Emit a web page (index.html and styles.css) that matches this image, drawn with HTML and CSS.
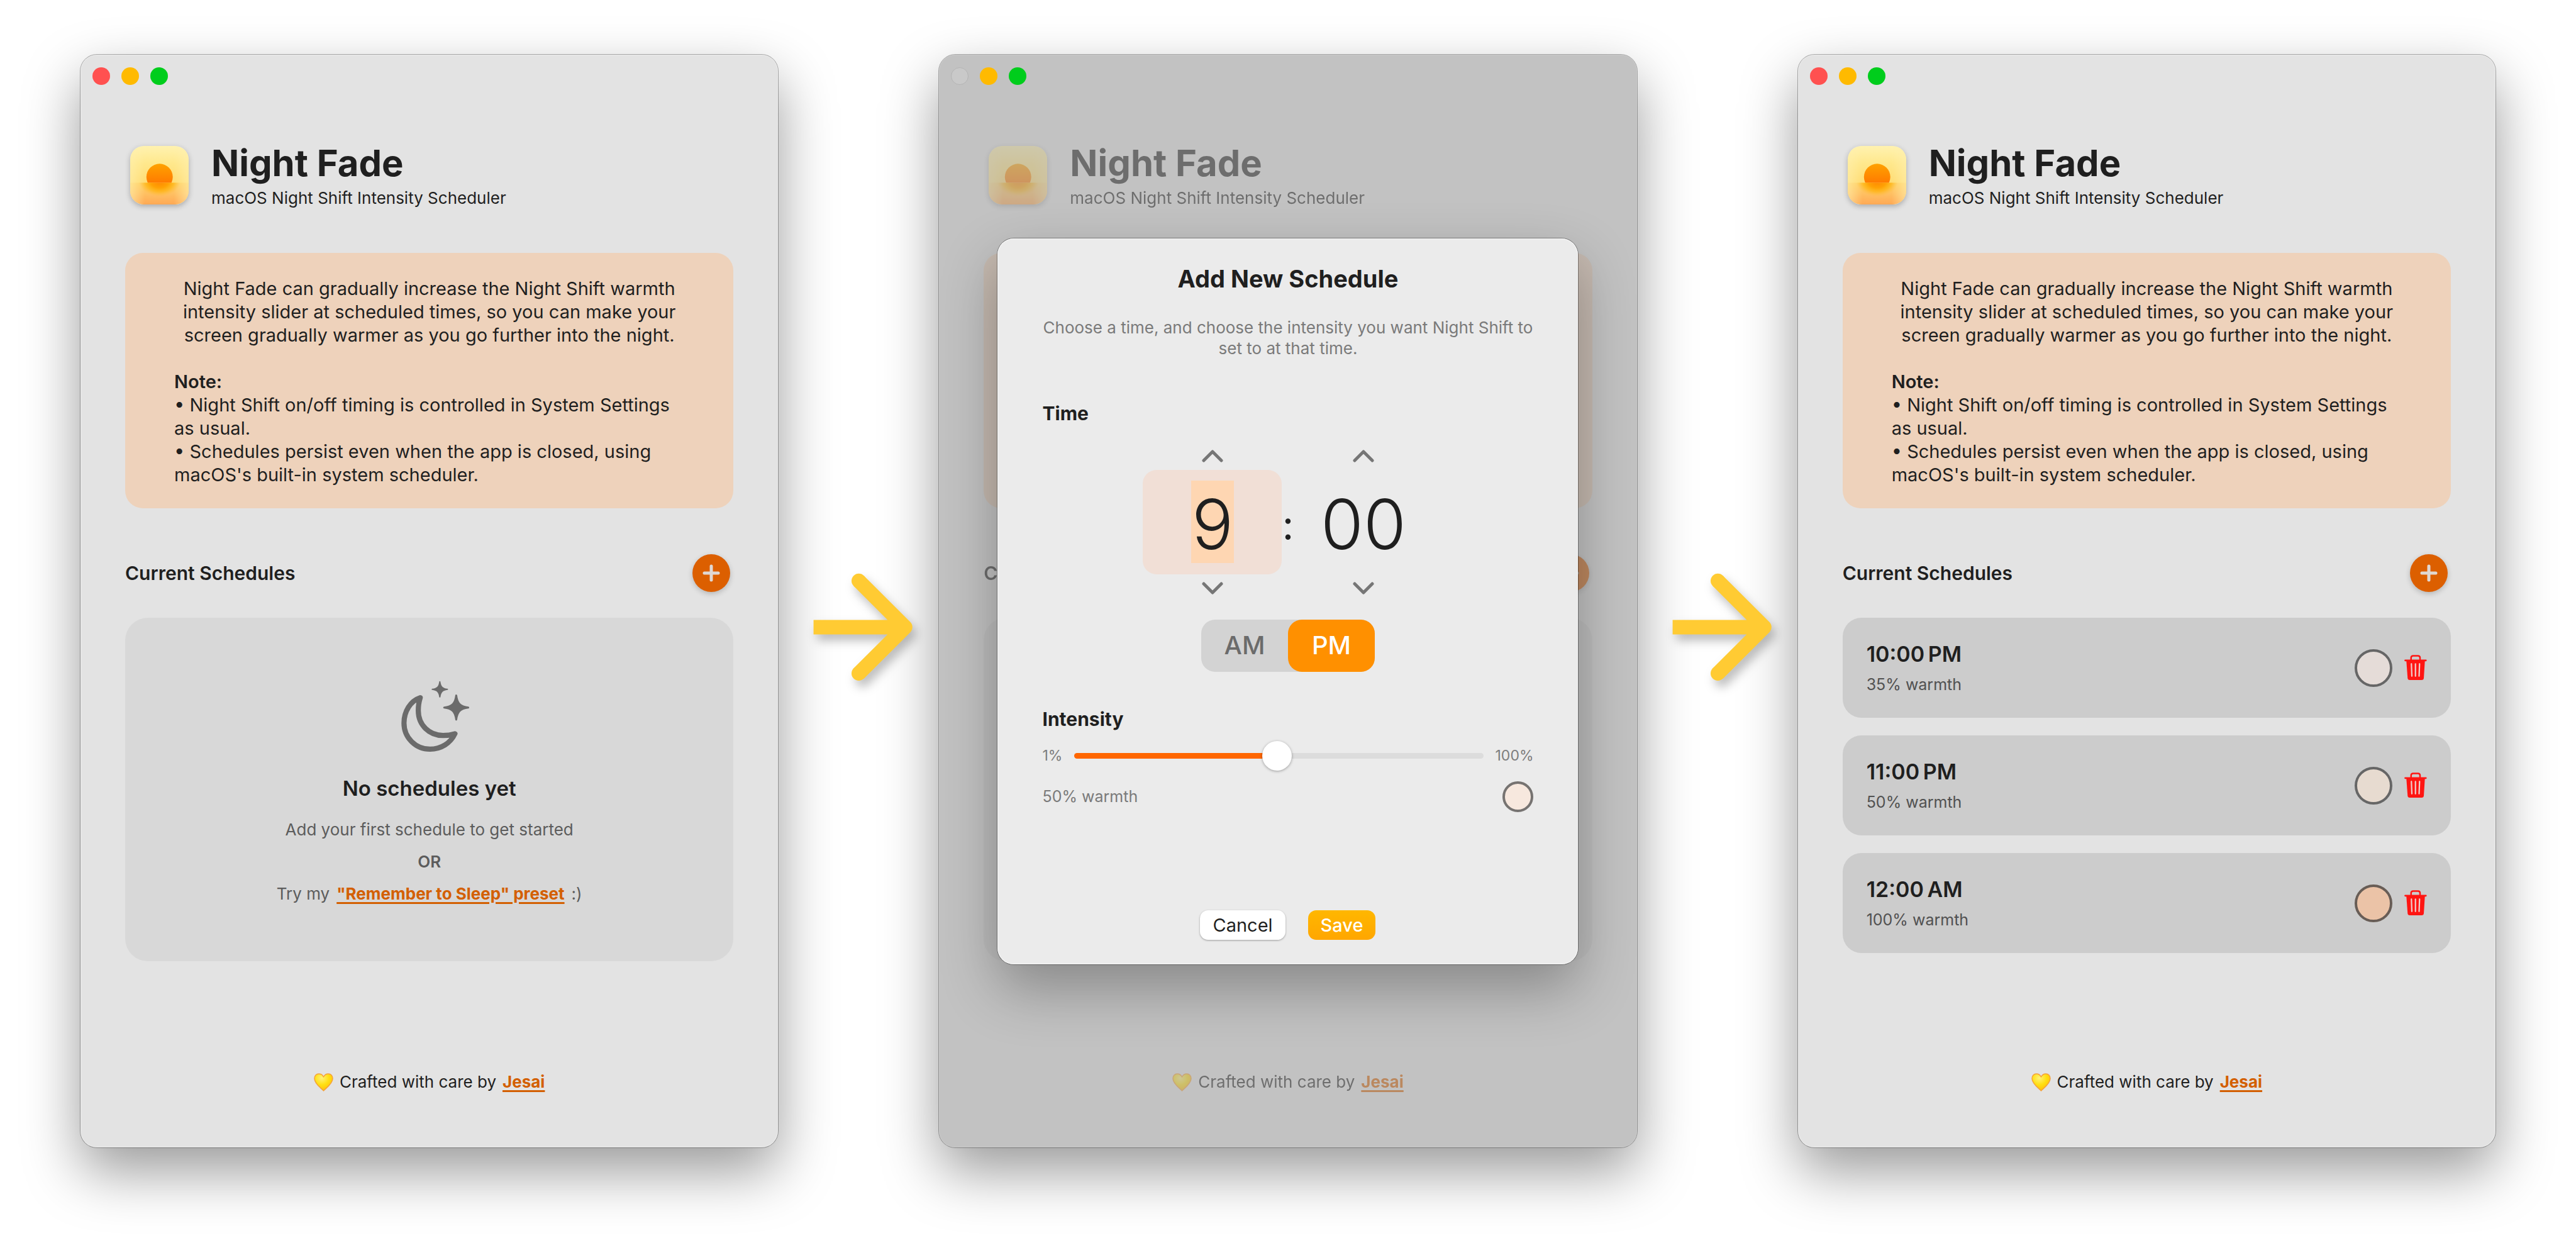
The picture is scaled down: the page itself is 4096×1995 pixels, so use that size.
FILE: index.html
```html
<!DOCTYPE html>
<html lang="en">
<head>
<meta charset="utf-8">
<meta name="viewport" content="width=device-width, initial-scale=1">
<title>Night Fade</title>
<link rel="stylesheet" href="styles.css">
</head>
<body>
<svg class="sprite" width="0" height="0" aria-hidden="true">
  <defs>
    <linearGradient id="sky" x1="0" y1="0" x2="0" y2="1">
      <stop offset="0" stop-color="#fff2b0"/>
      <stop offset="0.3" stop-color="#ffe88c"/>
      <stop offset="0.62" stop-color="#ffdc74"/>
    </linearGradient>
    <linearGradient id="sea" x1="0" y1="0" x2="0" y2="1">
      <stop offset="0" stop-color="#ffd062"/>
      <stop offset="0.5" stop-color="#ffc062"/>
      <stop offset="1" stop-color="#ffa955"/>
    </linearGradient>
    <linearGradient id="edge" x1="0" y1="0" x2="1" y2="0">
      <stop offset="0" stop-color="#fff0b0" stop-opacity="0.6"/>
      <stop offset="0.25" stop-color="#fff0b0" stop-opacity="0"/>
      <stop offset="0.75" stop-color="#fff0b0" stop-opacity="0"/>
      <stop offset="1" stop-color="#fff0b0" stop-opacity="0.6"/>
    </linearGradient>
    <linearGradient id="sun" x1="0" y1="0" x2="0" y2="1">
      <stop offset="0" stop-color="#ffa200"/>
      <stop offset="0.7" stop-color="#ff7c00"/>
    </linearGradient>
    <radialGradient id="glow" gradientUnits="userSpaceOnUse" cx="183" cy="218" r="130" gradientTransform="translate(0 54) scale(1 0.75)">
      <stop offset="0" stop-color="#ff8400"/>
      <stop offset="0.45" stop-color="#ffa000" stop-opacity="0.95"/>
      <stop offset="0.7" stop-color="#ffb000" stop-opacity="0.6"/>
      <stop offset="1" stop-color="#ffbc30" stop-opacity="0"/>
    </radialGradient>
    <clipPath id="above"><rect width="364" height="229"/></clipPath>
    <clipPath id="below"><rect y="229" width="364" height="135"/></clipPath>
    <clipPath id="tile"><rect width="364" height="364" rx="84"/></clipPath>
    <radialGradient id="gold" cx="0.4" cy="0.25" r="0.8">
      <stop offset="0" stop-color="#fff27a"/>
      <stop offset="0.5" stop-color="#ffdf12"/>
      <stop offset="1" stop-color="#fdb90d"/>
    </radialGradient>
    <symbol id="app" viewBox="0 0 364 364">
      <g clip-path="url(#tile)">
        <rect width="364" height="364" fill="url(#sky)"/>
        <rect y="229" width="364" height="135" fill="url(#sea)"/>
        <rect width="364" height="364" fill="url(#edge)"/>
        <circle cx="183" cy="193" r="82" fill="url(#sun)" clip-path="url(#above)"/>
        <rect width="364" height="364" fill="url(#glow)" clip-path="url(#below)"/>
      </g>
    </symbol>
    <symbol id="heart" viewBox="0 0 62 58">
      <path d="M31 56 C27 51 2 34 2 17 C2 8 8 2 16 2 C23 2 28 6 31 12 C34 6 39 2 46 2 C54 2 60 8 60 17 C60 34 35 51 31 56Z" fill="url(#gold)" stroke="#f5a13a" stroke-width="3" stroke-linejoin="round"/>
    </symbol>
    <symbol id="trash" viewBox="336 165 144 164">
      <path d="M349 202 H467 L460 312 Q459 325 446 325 H371 Q358 325 357 312Z"/>
      <path d="M342 200 H473" fill="none" stroke="currentColor" stroke-width="11" stroke-linecap="round"/>
      <path d="M379 200 V184 Q379 171 392 171 H423 Q436 171 436 184 V200" fill="none" stroke="currentColor" stroke-width="10"/>
      <path d="M381 222 L384 300 M407 222 V300 M433 222 L430 300" fill="none" stroke="#f0cdca" stroke-width="9" stroke-linecap="round"/>
    </symbol>
    <symbol id="up" viewBox="0 0 34 20">
      <path d="M3 17 L17 3 L31 17" fill="none" stroke="currentColor" stroke-width="5" stroke-linecap="round" stroke-linejoin="round"/>
    </symbol>
    <symbol id="down" viewBox="0 0 34 20">
      <path d="M3 3 L17 17 L31 3" fill="none" stroke="currentColor" stroke-width="5" stroke-linecap="round" stroke-linejoin="round"/>
    </symbol>
    <symbol id="plus" viewBox="0 0 28 28">
      <path d="M14 3 V25 M3 14 H25" fill="none" stroke="currentColor" stroke-width="5" stroke-linecap="round"/>
    </symbol>
    <symbol id="moon" viewBox="-16 50 500 450">
      <path d="M176 160 C115 180 75 245 75 318 C75 408 147 480 237 480 C305 480 365 442 392 384 C370 391 345 395 318 395 C232 395 164 330 164 240 C164 210 168 184 176 160Z" fill="none" stroke="currentColor" stroke-width="32" stroke-linejoin="round"/>
      <path d="M400 146 C406 196 425 215 475 221 C425 227 406 246 400 296 C394 246 375 227 325 221 C375 215 394 196 400 146Z" stroke="currentColor" stroke-width="12" stroke-linejoin="round"/>
      <path d="M298 61 C302 92 314 104 345 108 C314 112 302 124 298 155 C294 124 282 112 251 108 C282 104 294 92 298 61Z" stroke="currentColor" stroke-width="8" stroke-linejoin="round"/>
    </symbol>
    <symbol id="arrow" viewBox="-32 28 1000 1000">
      <path d="M189 528 H740 M470 240 L758 528 L470 815" fill="none" stroke="#ffcb33" stroke-width="90" stroke-linejoin="round"/>
      <circle cx="470" cy="240" r="45" fill="#ffcb33"/>
      <circle cx="470" cy="815" r="45" fill="#ffcb33"/>
    </symbol>
  </defs>
</svg>

<main class="stage">
  <section class="window" aria-label="Empty schedule list">
    <div class="lights"><span class="light close"></span><span class="light minimize"></span><span class="light expand"></span></div>
    <div class="content">
      <header class="brand">
        <svg class="app-icon" aria-hidden="true"><use href="#app"/></svg>
        <div>
          <h1 class="name">Night Fade</h1>
          <p class="tagline">macOS Night Shift Intensity Scheduler</p>
        </div>
      </header>
      <div class="info">
        <p class="lead">Night Fade can gradually increase the Night Shift warmth intensity slider at scheduled times, so you can make your screen gradually warmer as you go further into the night.</p>
        <p class="note"><strong>Note:</strong><br>• Night Shift on/off timing is controlled in System Settings as usual.<br>• Schedules persist even when the app is closed, using macOS's built-in system scheduler.</p>
      </div>
      <div class="section-head">
        <h2 class="section-title">Current Schedules</h2>
        <button class="add" type="button" aria-label="Add schedule"><svg class="plus" aria-hidden="true"><use href="#plus"/></svg></button>
      </div>
      <div class="empty">
        <svg class="moon" aria-hidden="true"><use href="#moon"/></svg>
        <h3 class="empty-title">No schedules yet</h3>
        <p class="hint first">Add your first schedule to get started</p>
        <p class="hint or">OR</p>
        <p class="hint try"><span>Try my</span><a class="link" href="#preset">"Remember to Sleep" preset</a><span>:)</span></p>
      </div>
      <footer class="credit"><svg class="heart" aria-hidden="true"><use href="#heart"/></svg><span>Crafted with care by</span><a class="link" href="#jesai">Jesai</a></footer>
    </div>
  </section>

  <svg class="arrow" viewBox="0 0 256 256" aria-hidden="true"><use href="#arrow"/></svg>

  <section class="window busy" aria-label="Adding a schedule">
    <div class="lights"><span class="light disabled"></span><span class="light minimize"></span><span class="light expand"></span></div>
    <div class="content">
      <header class="brand">
        <svg class="app-icon" aria-hidden="true"><use href="#app"/></svg>
        <div>
          <h1 class="name">Night Fade</h1>
          <p class="tagline">macOS Night Shift Intensity Scheduler</p>
        </div>
      </header>
      <div class="info"></div>
      <div class="section-head">
        <h2 class="section-title">Current Schedules</h2>
        <button class="add" type="button" aria-label="Add schedule"><svg class="plus" aria-hidden="true"><use href="#plus"/></svg></button>
      </div>
      <div class="empty"></div>
      <footer class="credit"><svg class="heart" aria-hidden="true"><use href="#heart"/></svg><span>Crafted with care by</span><a class="link" href="#jesai">Jesai</a></footer>
    </div>
    <div class="backdrop">
      <form class="sheet" role="dialog" aria-labelledby="sheet-title">
        <h2 class="sheet-title" id="sheet-title">Add New Schedule</h2>
        <p class="sheet-text">Choose a time, and choose the intensity you want Night Shift to set to at that time.</p>
        <h3 class="group time-group">Time</h3>
        <div class="clock">
          <div class="spinner">
            <button class="step" type="button" aria-label="Hour up"><svg class="chevron"><use href="#up"/></svg></button>
            <input class="digits selected" type="text" value="9" aria-label="Hour">
            <button class="step" type="button" aria-label="Hour down"><svg class="chevron"><use href="#down"/></svg></button>
          </div>
          <span class="colon">:</span>
          <div class="spinner">
            <button class="step" type="button" aria-label="Minute up"><svg class="chevron"><use href="#up"/></svg></button>
            <input class="digits" type="text" value="00" aria-label="Minute">
            <button class="step" type="button" aria-label="Minute down"><svg class="chevron"><use href="#down"/></svg></button>
          </div>
        </div>
        <div class="period">
          <button class="half" type="button" aria-pressed="false">AM</button>
          <button class="half" type="button" aria-pressed="true">PM</button>
        </div>
        <label class="group intensity-group" for="intensity">Intensity</label>
        <div class="slider-row">
          <span>1%</span>
          <input class="slider" id="intensity" type="range" min="1" max="100" value="50">
          <span>100%</span>
        </div>
        <div class="result">
          <span>50% warmth</span>
          <span class="swatch small"></span>
        </div>
        <div class="actions">
          <button class="action" type="button">Cancel</button>
          <button class="action primary" type="submit">Save</button>
        </div>
      </form>
    </div>
  </section>

  <svg class="arrow" viewBox="0 0 256 256" aria-hidden="true"><use href="#arrow"/></svg>

  <section class="window" aria-label="Schedule list">
    <div class="lights"><span class="light close"></span><span class="light minimize"></span><span class="light expand"></span></div>
    <div class="content">
      <header class="brand">
        <svg class="app-icon" aria-hidden="true"><use href="#app"/></svg>
        <div>
          <h1 class="name">Night Fade</h1>
          <p class="tagline">macOS Night Shift Intensity Scheduler</p>
        </div>
      </header>
      <div class="info">
        <p class="lead">Night Fade can gradually increase the Night Shift warmth intensity slider at scheduled times, so you can make your screen gradually warmer as you go further into the night.</p>
        <p class="note"><strong>Note:</strong><br>• Night Shift on/off timing is controlled in System Settings as usual.<br>• Schedules persist even when the app is closed, using macOS's built-in system scheduler.</p>
      </div>
      <div class="section-head">
        <h2 class="section-title">Current Schedules</h2>
        <button class="add" type="button" aria-label="Add schedule"><svg class="plus" aria-hidden="true"><use href="#plus"/></svg></button>
      </div>
      <ul class="schedules">
        <li class="schedule">
          <div class="when"><p class="time">10:00&#8201;PM</p><p class="warmth">35% warmth</p></div>
          <span class="swatch w35"></span>
          <button class="delete" type="button" aria-label="Delete 10:00 PM"><svg class="trash"><use href="#trash"/></svg></button>
        </li>
        <li class="schedule">
          <div class="when"><p class="time">11:00&#8201;PM</p><p class="warmth">50% warmth</p></div>
          <span class="swatch w50"></span>
          <button class="delete" type="button" aria-label="Delete 11:00 PM"><svg class="trash"><use href="#trash"/></svg></button>
        </li>
        <li class="schedule">
          <div class="when"><p class="time">12:00&#8201;AM</p><p class="warmth">100% warmth</p></div>
          <span class="swatch w100"></span>
          <button class="delete" type="button" aria-label="Delete 12:00 AM"><svg class="trash"><use href="#trash"/></svg></button>
        </li>
      </ul>
      <footer class="credit"><svg class="heart" aria-hidden="true"><use href="#heart"/></svg><span>Crafted with care by</span><a class="link" href="#jesai">Jesai</a></footer>
    </div>
  </section>
</main>
</body>
</html>
```
FILE: styles.css
```css
* {
  box-sizing: border-box;
  margin: 0;
  padding: 0;
}

body {
  background: #fff;
  color: #1f1f1f;
  font-family: Inter, "Liberation Sans", sans-serif;
  font-size: 26px;
  line-height: 30px;
}

button,
input {
  border: 0;
  background: none;
  color: inherit;
  font: inherit;
}

button svg {
  display: block;
}

.sprite {
  position: absolute;
}

.stage {
  display: grid;
  grid-template-columns: 1fr 256px 1fr 256px 1fr;
  min-height: 100vh;
  padding: 87px 128px 171px;
}

/* Window frame */
.window {
  position: relative;
  display: flex;
  flex-direction: column;
  border-radius: 26px;
  background: #e3e3e3;
  box-shadow: 0 0 0 1px rgba(0, 0, 0, 0.3), inset 0 0 0 1px rgba(255, 255, 255, 0.35), 0 38px 90px rgba(0, 0, 0, 0.4);
}

.lights {
  position: relative;
  z-index: 2;
  display: flex;
  gap: 18px;
  padding: 20px 19px 0;
}

.light {
  width: 28px;
  height: 28px;
  border-radius: 50%;
}

.close {
  background: #ff5150;
}

.minimize {
  background: #ffba00;
}

.expand {
  background: #00cd1c;
}

.disabled {
  border: 1px solid #b4b4b4;
  background: #c9c9c9;
}

.content {
  display: flex;
  flex: 1;
  flex-direction: column;
  padding: 90px 71px 89px;
}

.busy .content {
  opacity: 0.5;
}

/* Brand */
.brand {
  display: flex;
  align-items: center;
  gap: 36px;
  padding-left: 8px;
}

.app-icon {
  width: 93px;
  height: 93px;
  border-radius: 21px;
  box-shadow: 0 3px 8px rgba(0, 0, 0, 0.25);
}

.name {
  margin-bottom: 6px;
  font-size: 58px;
  font-weight: 700;
  line-height: 68px;
}

.tagline {
  line-height: 32px;
}

/* Information box */
.info {
  min-height: 406px;
  margin-top: 71px;
  padding: 38px 78px 35px;
  border-radius: 28px;
  background: #eed2bb;
  font-size: 29px;
  line-height: 37px;
}

.lead {
  margin-bottom: 37px;
  text-align: center;
}

.note strong {
  font-weight: 600;
}

/* Schedules */
.section-head {
  display: flex;
  align-items: center;
  justify-content: space-between;
  margin: 73px 0 41px;
  padding-right: 5px;
}

.section-title {
  font-size: 30px;
  font-weight: 600;
  line-height: 36px;
}

.add {
  display: grid;
  place-items: center;
  width: 60px;
  height: 60px;
  border-radius: 50%;
  background: #dc5f00;
  box-shadow: 0 3px 8px rgba(0, 0, 0, 0.2);
  color: #e0d8d2;
}

.plus {
  width: 28px;
  height: 28px;
}

.empty {
  display: flex;
  flex-direction: column;
  align-items: center;
  min-height: 546px;
  padding: 99px 32px 92px;
  border-radius: 36px;
  background: #d8d8d8;
}

.moon {
  width: 128px;
  height: 115px;
  color: #6b6b6b;
  fill: #6b6b6b;
}

.empty-title {
  margin-top: 37px;
  font-size: 33px;
  font-weight: 600;
  line-height: 40px;
}

.hint {
  margin-top: 21px;
  color: #5c5c5c;
}

.first {
  margin-top: 31px;
}

.or {
  font-weight: 600;
}

.try {
  display: flex;
  gap: 11px;
}

.link {
  color: #d35f00;
  font-weight: 700;
  text-decoration: underline;
  text-decoration-thickness: 3px;
  text-underline-offset: 4px;
}

.schedules {
  display: flex;
  flex-direction: column;
  gap: 28px;
  list-style: none;
}

.schedule {
  display: flex;
  align-items: center;
  gap: 19px;
  padding: 38px;
  border-radius: 30px;
  background: #ccc;
}

.when {
  flex: 1;
}

.time {
  margin-bottom: 13px;
  font-size: 34px;
  font-weight: 600;
  line-height: 40px;
}

.warmth {
  color: #515151;
  font-size: 25px;
}

.swatch {
  width: 60px;
  height: 60px;
  border: 4px solid #666;
  border-radius: 50%;
}

.w35 {
  background: #e5dcd8;
}

.w50 {
  background: #e7dbd0;
}

.w100 {
  border-color: #685d56;
  background: #ebc3a7;
}

.small {
  width: 49px;
  height: 49px;
  border-color: #767371;
  background: #f7e8de;
}

.delete {
  color: #ff1512;
}

.trash {
  width: 36px;
  height: 41px;
  fill: #ff1512;
}

.credit {
  display: flex;
  align-items: center;
  gap: 10px;
  justify-content: center;
  margin-top: auto;
}

.heart {
  width: 31px;
  height: 29px;
}

/* Arrow between windows */
.arrow {
  position: relative;
  z-index: 1;
  align-self: center;
  width: 100%;
  margin-top: 82px;
  filter: drop-shadow(6px 10px 8px rgba(0, 0, 0, 0.26));
}

/* Sheet */
.backdrop {
  position: absolute;
  inset: 0;
  display: flex;
  align-items: center;
  justify-content: center;
  overflow: hidden;
  border-radius: 26px;
  background: rgba(0, 0, 0, 0.145);
}

.sheet {
  display: flex;
  flex-direction: column;
  width: 923px;
  padding: 41px 71px 39px;
  border-radius: 26px;
  background: #ebebeb;
  box-shadow: 0 0 0 1px rgba(0, 0, 0, 0.35), inset 0 0 0 1px rgba(255, 255, 255, 0.7), 0 38px 90px rgba(0, 0, 0, 0.3);
}

.sheet-title {
  font-size: 38px;
  font-weight: 700;
  line-height: 46px;
  text-align: center;
}

.sheet-text {
  margin-top: 38px;
  color: #7a7a7a;
  line-height: 33px;
  text-align: center;
}

.group {
  font-size: 30px;
  font-weight: 700;
  line-height: 36px;
}

.time-group {
  margin: 69px 0 40px;
}

.clock {
  display: flex;
  align-items: center;
  justify-content: center;
}

.spinner {
  display: flex;
  flex-direction: column;
  align-items: center;
  gap: 12px;
}

.step {
  color: #767676;
}

.chevron {
  width: 34px;
  height: 20px;
}

.digits {
  width: 221px;
  height: 166px;
  padding-top: 6px;
  border-radius: 22px;
  font-size: 110px;
  font-weight: 350;
  line-height: 160px;
  text-align: center;
}

.selected {
  background: linear-gradient(#fed6b2, #fed6b2) center / 68px 131px no-repeat #f1dfd6;
}

.colon {
  width: 19px;
  padding-top: 10px;
  font-size: 64px;
  line-height: 72px;
  text-align: center;
}

.period {
  display: flex;
  align-self: center;
  margin-top: 40px;
  border-radius: 22px;
  background: #d3d3d3;
}

.half {
  width: 138px;
  height: 83px;
  border-radius: 22px;
  color: #6b6b6b;
  font-size: 40px;
  font-weight: 500;
}

.half[aria-pressed="true"] {
  background: #ff9000;
  color: #fff;
}

.intensity-group {
  margin: 57px 0 17px;
}

.slider-row {
  display: flex;
  align-items: center;
  gap: 19px;
  color: #7d7d7d;
  font-size: 23px;
}

.slider {
  flex: 1;
  min-width: 0;
  height: 47px;
  appearance: none;
}

.slider::-webkit-slider-runnable-track {
  height: 9px;
  border-radius: 5px;
  background: linear-gradient(90deg, #ff6600 50%, #dcdcdc 50%);
}

.slider::-webkit-slider-thumb {
  width: 47px;
  height: 47px;
  margin-top: -19px;
  border-radius: 50%;
  background: #fff;
  box-shadow: 0 1px 4px rgba(0, 0, 0, 0.35);
  appearance: none;
}

.result {
  display: flex;
  align-items: center;
  justify-content: space-between;
  margin-top: 17px;
  color: #7a7a7a;
  font-size: 25px;
}

.actions {
  display: flex;
  justify-content: center;
  gap: 36px;
  margin-top: 156px;
}

.action {
  height: 47px;
  padding: 0 20px;
  border-radius: 13px;
  background: #fff;
  box-shadow: 0 1px 3px rgba(0, 0, 0, 0.35);
  font-size: 29px;
  line-height: 47px;
}

.primary {
  background: linear-gradient(#ffb700, #ffa600);
  box-shadow: none;
  color: #fff;
  font-weight: 500;
}
```
